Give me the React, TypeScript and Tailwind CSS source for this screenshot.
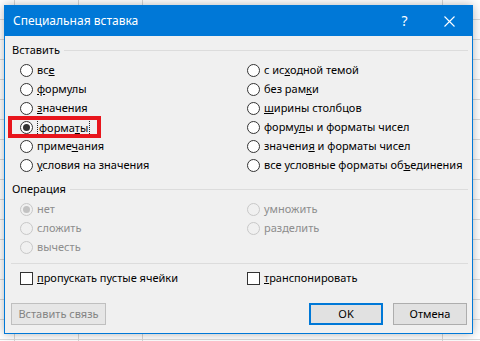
import React from "react";

function Radio({ checked = false, disabled = false }: { checked?: boolean; disabled?: boolean }) {
  if (disabled) {
    return (
      <span className="flex h-[13px] w-[13px] shrink-0 items-center justify-center rounded-full border border-[#c8c8c8] bg-[#f0f0f0]">
        {checked && <span className="h-[7px] w-[7px] rounded-full bg-[#c2c2c2]" />}
      </span>
    );
  }
  return (
    <span className="flex h-[13px] w-[13px] shrink-0 items-center justify-center rounded-full border border-[#333333] bg-white">
      {checked && <span className="h-[7px] w-[7px] rounded-full bg-[#333333]" />}
    </span>
  );
}

function Opt({
  children,
  checked,
  disabled,
  focus,
}: {
  children: React.ReactNode;
  checked?: boolean;
  disabled?: boolean;
  focus?: boolean;
}) {
  return (
    <div className="flex h-[19px] items-center gap-[4px] whitespace-nowrap">
      <Radio checked={checked} disabled={disabled} />
      {focus ? (
        <span className="border border-dotted border-[#222] px-px leading-[15px]">{children}</span>
      ) : (
        <span className={disabled ? "text-[#8d8d8d]" : "text-black"}>{children}</span>
      )}
    </div>
  );
}

function Check({ children }: { children: React.ReactNode }) {
  return (
    <div className="flex h-[19px] items-center gap-[4px] whitespace-nowrap">
      <span className="h-[13px] w-[13px] shrink-0 border border-[#333333] bg-white" />
      <span>{children}</span>
    </div>
  );
}

function GroupHeader({ title }: { title: string }) {
  return (
    <div className="flex h-[14px] items-center pl-[7px] pr-[4px]">
      <span className="leading-[14px]">{title}</span>
      <span className="ml-[4px] h-px flex-1 bg-[#dcdcdc]" />
    </div>
  );
}

export default function App() {
  return (
    <div className="relative h-[341px] w-[480px] overflow-hidden bg-white font-['Noto_Sans',sans-serif] text-[11px] text-black">
      {/* spreadsheet background */}
      <div className="absolute inset-0 flex bg-[linear-gradient(to_bottom,transparent_19px,#dadada_19px)] [background-size:100%_20px]">
        <div className="h-full w-[15px] border-r border-[#d6d6d6]" />
        <div className="h-full w-[64px] border-r border-[#d6d6d6]" />
        <div className="h-full w-[64px] border-r border-[#d6d6d6]" />
        <div className="h-full w-[300px] border-r border-[#d6d6d6]" />
        <div className="h-full flex-1" />
      </div>

      {/* dialog */}
      <div className="absolute left-[4px] top-[5px] flex h-[329px] w-[469px] flex-col border border-[#0078d7] bg-[#f0f0f0] shadow-[0_0_10px_rgba(0,0,0,0.3)]">
        {/* title bar */}
        <div className="flex h-[30px] shrink-0 items-center bg-[#0078d7] pl-[8px] text-white">
          <span className="flex-1 text-[12px] leading-none">Специальная вставка</span>
          <span className="flex h-[30px] w-[45px] items-center justify-center text-[14px] leading-none">?</span>
          <span className="flex h-[30px] w-[45px] items-center justify-center">
            <svg width="11" height="11" viewBox="0 0 11 11">
              <path d="M0.5 0.5 L10.5 10.5 M10.5 0.5 L0.5 10.5" stroke="white" strokeWidth="1.1" fill="none" />
            </svg>
          </span>
        </div>

        {/* body */}
        <div className="flex flex-1 flex-col">
          <div className="mt-[7px]">
            <GroupHeader title="Вставить" />
          </div>
          <div className="mt-[4px] grid grid-cols-[227px_1fr] pl-[15px]">
            <div className="flex flex-col">
              <Opt>
                вс<u>е</u>
              </Opt>
              <Opt>
                <u>ф</u>ормулы
              </Opt>
              <Opt>
                <u>з</u>начения
              </Opt>
              <Opt checked focus>
                форма<u>т</u>ы
              </Opt>
              <Opt>
                приме<u>ч</u>ания
              </Opt>
              <Opt>
                <u>у</u>словия на значения
              </Opt>
            </div>
            <div className="flex flex-col">
              <Opt>
                с ис<u>х</u>одной темой
              </Opt>
              <Opt>
                без рам<u>к</u>и
              </Opt>
              <Opt>
                <u>ш</u>ирины столбцов
              </Opt>
              <Opt>
                форму<u>л</u>ы и форматы чисел
              </Opt>
              <Opt>
                значени<u>я</u> и форматы чисел
              </Opt>
              <Opt>
                все условные форматы об<u>ъ</u>единения
              </Opt>
            </div>
          </div>

          <div className="mt-[7px]">
            <GroupHeader title="Операция" />
          </div>
          <div className="mt-[4px] grid h-[57px] grid-cols-[227px_1fr] pl-[15px]">
            <div className="flex flex-col">
              <Opt checked disabled>
                нет
              </Opt>
              <Opt disabled>сложить</Opt>
              <Opt disabled>вычесть</Opt>
            </div>
            <div className="flex flex-col">
              <Opt disabled>умножить</Opt>
              <Opt disabled>разделить</Opt>
            </div>
          </div>

          <div className="ml-[6px] mr-[4px] mt-[6px] h-px bg-[#dcdcdc]" />

          <div className="mt-[5px] grid grid-cols-[227px_1fr] pl-[15px]">
            <Check>
              <u>п</u>ропускать пустые ячейки
            </Check>
            <Check>
              <u>т</u>ранспонировать
            </Check>
          </div>

          <div className="mt-[15px] flex items-center pl-[6px] pr-[5px]">
            <div className="flex h-[22px] w-[95px] items-center justify-center whitespace-nowrap border border-[#bfbfbf] bg-[#e6e6e6] text-[#838383]">
              Вставить связь
            </div>
            <div className="flex-1" />
            <div className="flex h-[22px] w-[74px] items-center justify-center border-2 border-[#0078d7] bg-[#e1e1e1]">
              OK
            </div>
            <div className="ml-[10px] flex h-[22px] w-[74px] items-center justify-center border border-[#adadad] bg-[#e1e1e1]">
              Отмена
            </div>
          </div>
        </div>

        {/* red annotation frame */}
        <div className="pointer-events-none absolute left-[3px] top-[110px] h-[22px] w-[93px] border-4 border-[#e8151c]" />
      </div>
    </div>
  );
}
